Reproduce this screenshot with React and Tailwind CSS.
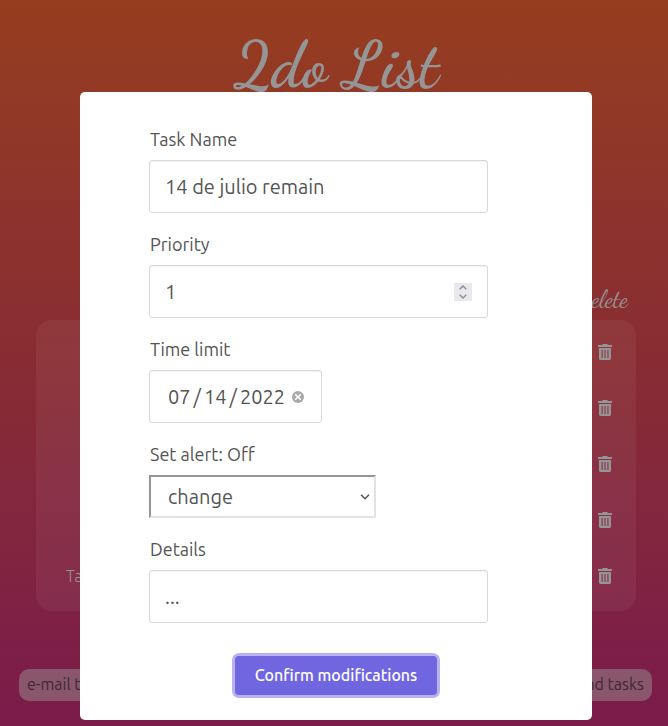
import { useState } from "react";

const tasks = ["", "", "", "", "Tarea"];

const fieldBox =
  "h-[53px] rounded-[3px] border border-[#d9d9d9] bg-white text-xl text-[#545454] shadow-[inset_0_1px_1px_rgba(0,0,0,0.06)]";
const labelText = "mb-[7px] block pl-px text-lg leading-7 text-[#545454]";

function TrashIcon() {
  return (
    <svg width="14" height="16" viewBox="0 0 14 16" fill="currentColor" aria-hidden="true">
      <path d="M4.5 0h5v1H14v2H0V1h4.5z" />
      <path
        fillRule="evenodd"
        d="M1 4h12v10.5a1.5 1.5 0 0 1-1.5 1.5h-9A1.5 1.5 0 0 1 1 14.5zM3.6 6v8h1.1V6zM6.5 6v8h1.1V6zM9.4 6v8h1.1V6z"
      />
    </svg>
  );
}

function TaskPage() {
  return (
    <div className="flex min-h-screen flex-col pl-1 text-[#959595]">
      <h1 className="pt-[26px] text-center font-['Dancing_Script','Liberation_Serif',serif] text-[64px] leading-20 font-bold">
        2do List
      </h1>
      <main className="mx-8 mt-[182px]">
        <div className="flex h-8 items-start justify-end pr-2 font-['Dancing_Script','Liberation_Serif',serif] text-2xl leading-6">
          Delete
        </div>
        <ul className="rounded-2xl bg-white/5 pt-1 pr-6 pb-[7px] pl-[30px]">
          {tasks.map((task, i) => (
            <li key={i} className="flex h-14 items-center justify-between text-base font-light">
              <span>{task}</span>
              <button type="button" aria-label="Delete task">
                <TrashIcon />
              </button>
            </li>
          ))}
        </ul>
      </main>
      <footer className="mt-[58px] mr-4 ml-[15px] flex justify-between pb-6">
        <button type="button" className="h-8 rounded-[10px] bg-[#89566c] px-2 pb-0.5 text-base text-[#3c2a33]">
          e-mail tasks
        </button>
        <button type="button" className="h-8 rounded-[10px] bg-[#89566c] px-2 pb-0.5 text-base text-[#3c2a33]">
          send tasks
        </button>
      </footer>
    </div>
  );
}

function EditDialog() {
  const [name, setName] = useState("14 de julio remain");
  const [priority, setPriority] = useState(1);
  const [date, setDate] = useState("2022-07-14");
  const [details, setDetails] = useState("...");

  return (
    <div className="absolute inset-0 flex items-start justify-center pt-[92px] pl-1">
      <form
        role="dialog"
        aria-label="Edit task"
        onSubmit={(e) => e.preventDefault()}
        className="w-full max-w-[512px] rounded-[5px] bg-white px-[69px] pt-[33px] pb-[25px]"
      >
        <div className="mr-[35px] flex flex-col gap-[17px]">
          <div>
            <label htmlFor="name" className={labelText}>Task Name</label>
            <input
              id="name"
              value={name}
              onChange={(e) => setName(e.target.value)}
              className={`${fieldBox} w-full px-[15px]`}
            />
          </div>
          <div>
            <label htmlFor="priority" className={labelText}>Priority</label>
            <div className={`${fieldBox} flex items-center px-[15px]`}>
              <input
                id="priority"
                type="number"
                value={priority}
                onChange={(e) => setPriority(Number(e.target.value))}
                className="min-w-0 flex-1 outline-none [appearance:textfield] [&::-webkit-inner-spin-button]:appearance-none"
              />
              <div className="flex h-[18px] w-[18px] flex-col items-center justify-center gap-1 bg-[#e9e9ed] text-[#8f8f9d]">
                <button type="button" aria-label="Increase" onClick={() => setPriority(priority + 1)}>
                  <svg className="block" width="8" height="5" viewBox="0 0 8 5" fill="none" stroke="currentColor" strokeWidth="1.5">
                    <path d="M.7 4.3 4 1l3.3 3.3" />
                  </svg>
                </button>
                <button type="button" aria-label="Decrease" onClick={() => setPriority(priority - 1)}>
                  <svg className="block" width="8" height="5" viewBox="0 0 8 5" fill="none" stroke="currentColor" strokeWidth="1.5">
                    <path d="M.7.7 4 4 7.3.7" />
                  </svg>
                </button>
              </div>
            </div>
          </div>
          <div>
            <label htmlFor="date" className={labelText}>Time limit</label>
            <div className={`${fieldBox} flex w-[173px] items-center justify-between pr-[17px] pl-[18px]`}>
              <input
                id="date"
                type="date"
                value={date}
                onChange={(e) => setDate(e.target.value)}
                className="w-[122px] min-w-0 outline-none [&::-webkit-calendar-picker-indicator]:hidden [&::-webkit-datetime-edit]:p-0 [&::-webkit-datetime-edit-text]:px-[3px] [&::-webkit-datetime-edit-day-field]:p-0 [&::-webkit-datetime-edit-month-field]:p-0 [&::-webkit-datetime-edit-year-field]:p-0"
              />
              <button type="button" aria-label="Clear date" className="shrink-0" onClick={() => setDate("")}>
                <svg className="block" width="12" height="12" viewBox="0 0 12 12">
                  <circle cx="6" cy="6" r="6" fill="#a9a9a9" />
                  <path d="m3.7 3.7 4.6 4.6m0-4.6L3.7 8.3" stroke="#fff" strokeWidth="1.6" strokeLinecap="round" />
                </svg>
              </button>
            </div>
          </div>
          <div>
            <label htmlFor="alert" className={labelText}>Set alert: Off</label>
            <div className="grid w-[227px] items-center">
              <select
                id="alert"
                className="col-start-1 row-start-1 h-[43px] appearance-none border-2 border-t-[#959595] border-r-[#e3e3e3] border-b-[#e3e3e3] border-l-[#959595] bg-white px-[17px] text-xl text-[#545454]"
              >
                <option>change</option>
              </select>
              <svg className="pointer-events-none col-start-1 row-start-1 mr-[6px] justify-self-end" width="10" height="6" viewBox="0 0 10 6" fill="none" stroke="#545454" strokeWidth="1.5">
                <path d="m1 .8 4 4 4-4" />
              </svg>
            </div>
          </div>
          <div>
            <label htmlFor="details" className={labelText}>Details</label>
            <input
              id="details"
              value={details}
              onChange={(e) => setDetails(e.target.value)}
              className={`${fieldBox} w-full px-[15px]`}
            />
          </div>
        </div>
        <div className="mt-[33px] flex justify-center">
          <button
            type="submit"
            className="h-[39px] rounded-[4px] bg-[#7066e0] px-5 pb-0.5 text-base font-medium text-white ring-3 ring-[#b8b3f0]"
          >
            Confirm modifications
          </button>
        </div>
      </form>
    </div>
  );
}

export default function App() {
  return (
    <div className="relative min-h-screen bg-linear-to-b from-[#963d1f] via-[#882c33] to-[#7a1b4a] font-['Ubuntu','Noto_Sans',sans-serif]">
      <TaskPage />
      <EditDialog />
    </div>
  );
}
